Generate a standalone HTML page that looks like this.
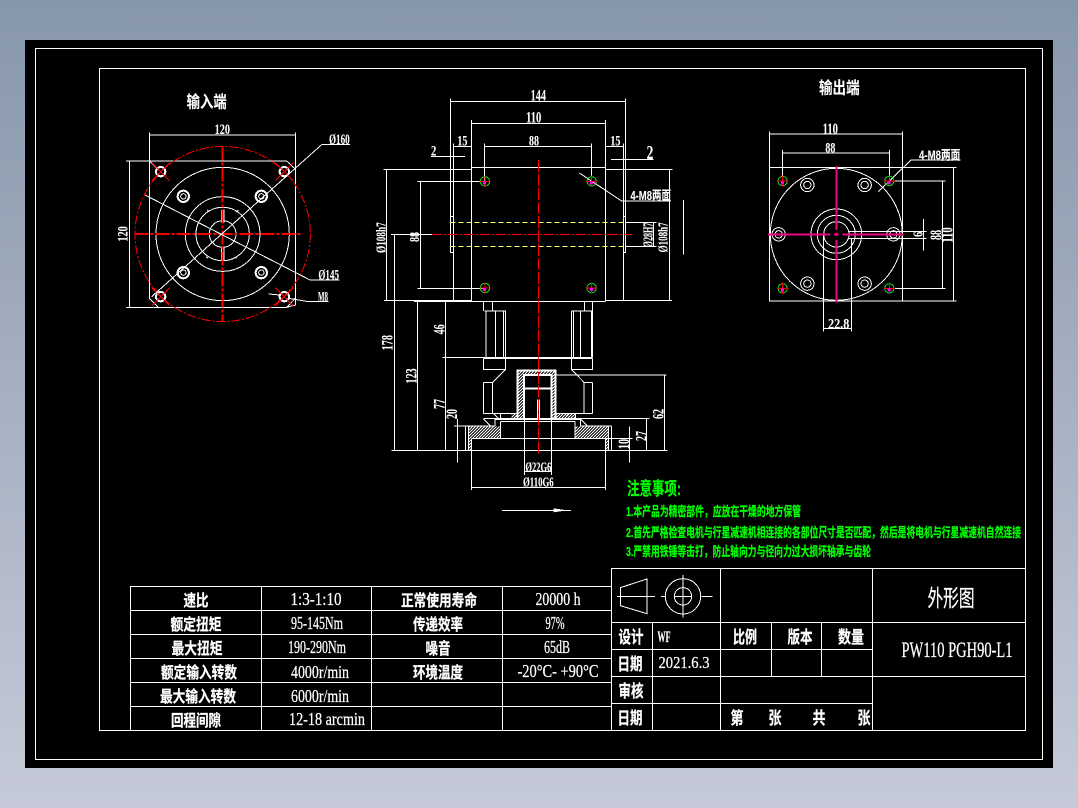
<!DOCTYPE html>
<html><head><meta charset="utf-8"><title>外形图</title>
<style>
html,body{margin:0;padding:0;width:1078px;height:808px;overflow:hidden;background:linear-gradient(#8797ab,#c6cad8)}
svg{position:absolute;left:0;top:0}
.z path,.z line,.z circle,.z rect{vector-effect:non-scaling-stroke}
.w{fill:none;stroke:#fff;stroke-width:1}
.b{fill:none;stroke:#fff;stroke-width:2}
.r{fill:none;stroke:#f00;stroke-width:1}
.rd{fill:none;stroke:#f00;stroke-width:1;stroke-dasharray:9 2 2 2}
.rt{fill:none;stroke:#f00;stroke-width:1;stroke-dasharray:10 2 2 2}
.rt2{fill:none;stroke:#f00;stroke-width:2;stroke-dasharray:14 2 3 2}
.m{fill:none;stroke:#f0047f;stroke-width:2}
.y{fill:none;stroke:#ffff70;stroke-width:1;stroke-dasharray:5 3}
.g{fill:none;stroke:#1ddc1d;stroke-width:1}
text{fill:#fff;stroke:#fff;stroke-width:.25px;font-family:"Liberation Serif","Noto Sans CJK SC",serif;text-anchor:middle}
.c{font-family:"Liberation Sans","Noto Sans CJK SC",sans-serif;font-weight:700}
.gr{fill:#0f0;stroke:#0f0;text-anchor:start;font-family:"Liberation Sans","Noto Sans CJK SC",sans-serif;font-weight:700}
</style></head><body>
<svg width="1078" height="808" viewBox="0 0 1078 808" xmlns="http://www.w3.org/2000/svg" shape-rendering="crispEdges">
<defs>
<pattern id="h" patternUnits="userSpaceOnUse" width="9" height="9"><path d="M-2 2L2 -2M0 9L9 0M7 11L11 7" stroke="#fff" stroke-width="2.6" fill="none"/></pattern>
</defs>
<rect x="25" y="40" width="1028" height="728" fill="#000"/>
<rect x="35.5" y="48.5" width="1007" height="711" fill="none" stroke="#fff"/>
<rect x="99.5" y="68.5" width="926" height="662" fill="none" stroke="#fff"/>

<!-- input view -->
<g class="z" transform="translate(100 70) scale(.33333)">
<path class="w" d="M78 273H560L586 297V705L560 712H78M148 187V685L175 712M148 273L175 300M88 273V712M148 195H586M586 187V297M560 712L586 685"/>
<circle class="rd" cx="368" cy="492" r="263"/>
<circle class="w" cx="368" cy="492" r="200"/>
<circle class="w" cx="368" cy="492" r="112"/>
<circle class="w" cx="368" cy="492" r="80"/>
<circle class="w" cx="368" cy="492" r="40"/>
<path class="w" d="M364 420H372V458M364 420V458M364 530V572H372V530M322 420l6 6M415 420l-6 6M318 560l6 4M410 565l-6-4"/>
<circle class="b" cx="182" cy="305" r="14"/><circle class="b" cx="553" cy="305" r="14"/><circle class="b" cx="182" cy="680" r="14"/><circle class="b" cx="553" cy="680" r="14"/>
<g><circle class="b" cx="250" cy="379" r="17"/><circle class="w" cx="250" cy="379" r="8"/><circle class="b" cx="484" cy="379" r="17"/><circle class="w" cx="484" cy="379" r="8"/><circle class="b" cx="250" cy="608" r="17"/><circle class="w" cx="250" cy="608" r="8"/><circle class="b" cx="484" cy="608" r="17"/><circle class="w" cx="484" cy="608" r="8"/></g>
<path class="r" d="M155 278L209 332M209 278L155 332M526 278L580 332M580 278L526 332M155 653L209 707M209 653L155 707M526 653L580 707M580 653L526 707"/>
<path class="rt2" d="M103 492H606M368 230V755"/>
<path class="w" d="M155 680L665 224H750M135 375L630 630H718M505 672L540 675M565 685L625 695H685"/>
<text x="320" y="112" font-size="50" class="c" textLength="120" lengthAdjust="spacingAndGlyphs">输入端</text>
<text x="367" y="192" font-size="44" textLength="46" lengthAdjust="spacingAndGlyphs" font-weight="700">120</text>
<text transform="translate(83 492) rotate(-90)" font-size="44" textLength="46" lengthAdjust="spacingAndGlyphs" font-weight="700">120</text>
<text x="718" y="222" font-size="44" textLength="62" lengthAdjust="spacingAndGlyphs" font-weight="700">Ø160</text>
<text x="686" y="629" font-size="44" textLength="62" lengthAdjust="spacingAndGlyphs" font-weight="700">Ø145</text>
<text x="669" y="694" font-size="44" textLength="30" lengthAdjust="spacingAndGlyphs" font-weight="700">M8</text>
</g>

<!-- main view -->
<g class="z" transform="translate(370 80) scale(.33333)">
<path class="w" d="M241 55V518H250M766 55V518H760M241 409H250M766 409H760M241 64H766M304 120V664M706 120V664M304 130H706M343 190V304M664 190V304M343 199H664M250 190V661M760 190V661M250 199H304M706 199H760M183 229H285M723 238H850M304 262H706M40 268H304M706 268H908M304 664H706M132 664H304M42 661H304M706 661H906M49 268V661M898 268V661M151 304V625M142 304H343M142 625H343M63 463H186M73 463V690M142 664V690M226 664V690M340 664V690M367 664V690M643 664V690M667 664V690M766 427H860M766 499H860M850 427V499M940 360V524"/>
<path class="y" d="M241 427H766M241 499H766"/>
<path class="rt" d="M186 463H786"/>
<path class="rt" stroke-dasharray="12 1" style="stroke-dasharray:12 2" d="M505 240V690"/>
<path class="w" d="M628 279L755 363H903"/>
<g id="hh">
<circle class="g" cx="345" cy="304" r="14"/><circle class="g" cx="665" cy="304" r="14"/><circle class="g" cx="345" cy="624" r="14"/><circle class="g" cx="665" cy="624" r="14"/>
<path class="r" d="M328 304H362M345 287V321M648 304H682M665 287V321M328 624H362M345 607V641M648 624H682M665 607V641"/>
<rect x="339" y="304" width="9" height="9" fill="#f0f"/><rect x="660" y="304" width="9" height="9" fill="#f0f"/><rect x="339" y="624" width="9" height="9" fill="#f0f"/><rect x="660" y="624" width="9" height="9" fill="#f0f"/>
</g>
<g font-weight="700">
<text x="505" y="62" font-size="46" textLength="46" lengthAdjust="spacingAndGlyphs">144</text>
<text x="491" y="128" font-size="46" textLength="46" lengthAdjust="spacingAndGlyphs">110</text>
<text x="492" y="197" font-size="44" textLength="30" lengthAdjust="spacingAndGlyphs">88</text>
<text x="277" y="197" font-size="44" textLength="30" lengthAdjust="spacingAndGlyphs">15</text>
<text x="736" y="197" font-size="44" textLength="30" lengthAdjust="spacingAndGlyphs">15</text>
<text x="191" y="227" font-size="44" textLength="16" lengthAdjust="spacingAndGlyphs">2</text>
<text x="840" y="237" font-size="60" textLength="20" lengthAdjust="spacingAndGlyphs">2</text>
<text x="842" y="360" font-size="40" class="c" textLength="122" lengthAdjust="spacingAndGlyphs">4-M8两面</text>
<text transform="translate(46 473) rotate(-90)" font-size="42" textLength="92" lengthAdjust="spacingAndGlyphs">Ø108h7</text>
<text transform="translate(892 472) rotate(-90)" font-size="42" textLength="90" lengthAdjust="spacingAndGlyphs">Ø108h7</text>
<text transform="translate(848 465) rotate(-90)" font-size="42" textLength="74" lengthAdjust="spacingAndGlyphs">Ø28H7</text>
<text transform="translate(147 471) rotate(-90)" font-size="42" textLength="30" lengthAdjust="spacingAndGlyphs">88</text>
</g>
</g>

<!-- lower section -->
<g class="z" transform="translate(370 295) scale(.33333)">
<rect x="442" y="226" width="115" height="14" fill="url(#h)"/>
<rect x="442" y="240" width="20" height="130" fill="url(#h)"/>
<rect x="545" y="240" width="12" height="130" fill="url(#h)"/>
<rect x="425" y="355" width="20" height="15" fill="url(#h)"/>
<rect x="557" y="355" width="33" height="15" fill="url(#h)"/>
<rect x="590" y="355" width="26" height="15" fill="url(#h)"/>
<rect x="296" y="394" width="94" height="36" fill="url(#h)"/>
<rect x="617" y="394" width="99" height="36" fill="url(#h)"/>
<rect x="296" y="430" width="8" height="36" fill="url(#h)"/>
<rect x="706" y="430" width="10" height="36" fill="url(#h)"/>
<path class="w" d="M340 20V48M368 20V48M343 48H407V187M348 48V187M377 48V187M400 48V187M604 48H666V187M604 48V187M632 48V187M610 48V187M643 20V48M667 20V48M217 187H668"/>
<path class="b" d="M340 189H668M666 48V187"/>
<path class="w" d="M340 190V223H407V190M604 190V223H668V190M340 262V355M368 262V355M405 225L368 262H340M606 225L642 262H668M642 262V355M668 262V355"/>
<path class="b" d="M442 370V226H557V370M462 370V240H545V370M462 280H545"/>
<path class="w" d="M463 370V535M545 370V535M340 355H445M557 355H668M340 370H838M370 355L388 372M392 355V372M616 355V372M596 355L586 368"/>
<path class="w" d="M375 393V373H632V393M392 380H615M392 380V430M615 380V430M252 393H375M632 393H725M286 393V466M296 393V466M716 393V466M725 393V466M304 430H788M304 430V585M706 430V585M64 466H893M340 372L362 393M632 373L652 393M557 240H890"/>
<path class="w" d="M883 240V466M830 370V466M778 395V503M262 372V503M226 20V466M142 20V466M73 0V466M463 530H545M304 577H706M463 530V540M545 530V540M396 646H603"/>
<path fill="#fff" d="M550 640L592 646L550 652Z"/>
<rect x="502" y="315" width="6" height="57" fill="#000" stroke="#fff"/>
<path class="rt" style="stroke-dasharray:12 2" d="M505 20V482"/>
<g font-weight="700">
<text transform="translate(68 143) rotate(-90)" font-size="46" textLength="46" lengthAdjust="spacingAndGlyphs">178</text>
<text transform="translate(139 243) rotate(-90)" font-size="46" textLength="46" lengthAdjust="spacingAndGlyphs">123</text>
<text transform="translate(223 103) rotate(-90)" font-size="46" textLength="30" lengthAdjust="spacingAndGlyphs">46</text>
<text transform="translate(223 327) rotate(-90)" font-size="46" textLength="30" lengthAdjust="spacingAndGlyphs">77</text>
<text transform="translate(261 357) rotate(-90)" font-size="46" textLength="30" lengthAdjust="spacingAndGlyphs">20</text>
<text transform="translate(881 357) rotate(-90)" font-size="46" textLength="30" lengthAdjust="spacingAndGlyphs">62</text>
<text transform="translate(829 423) rotate(-90)" font-size="46" textLength="30" lengthAdjust="spacingAndGlyphs">27</text>
<text transform="translate(777 447) rotate(-90)" font-size="46" textLength="30" lengthAdjust="spacingAndGlyphs">10</text>
<text x="505" y="529" font-size="42" textLength="78" lengthAdjust="spacingAndGlyphs">Ø22G6</text>
<text x="505" y="575" font-size="42" textLength="92" lengthAdjust="spacingAndGlyphs">Ø110G6</text>
</g>
</g>

<!-- output view -->
<g class="z" transform="translate(750 70) scale(.33333)">
<path class="w" d="M58 185V693H457V185M58 292H620M457 693H620M58 192H457M97 240V333M418 240V333M97 249H418M610 292V693M577 333V655M430 333H587M430 655H587M520 447V542M295 484H530M295 505H530M220 493V785M304 505V785M220 776H304M483 270H632M483 270L385 365"/>
<circle class="w" cx="259" cy="493" r="198"/>
<circle class="w" cx="259" cy="493" r="76"/><circle class="w" cx="259" cy="493" r="57"/><circle class="w" cx="259" cy="493" r="38"/>
<g>
<circle class="w" cx="172" cy="345" r="20"/><circle class="w" cx="172" cy="345" r="11"/>
<circle class="w" cx="344" cy="345" r="20"/><circle class="w" cx="344" cy="345" r="11"/>
<circle class="w" cx="86" cy="493" r="20"/><circle class="w" cx="86" cy="493" r="11"/>
<circle class="w" cx="430" cy="493" r="20"/><circle class="w" cx="430" cy="493" r="11"/>
<circle class="w" cx="172" cy="641" r="20"/><circle class="w" cx="172" cy="641" r="11"/>
<circle class="w" cx="344" cy="641" r="20"/><circle class="w" cx="344" cy="641" r="11"/>
</g>
<circle class="g" cx="98" cy="333" r="14"/><circle class="g" cx="418" cy="333" r="14"/><circle class="g" cx="98" cy="655" r="14"/><circle class="g" cx="418" cy="655" r="14"/>
<path class="r" d="M81 333H115M98 316V350M401 333H435M418 316V350M81 655H115M98 638V672M401 655H435M418 638V672"/>
<rect x="93" y="334" width="9" height="9" fill="#f0f"/><rect x="413" y="334" width="9" height="9" fill="#f0f"/><rect x="93" y="655" width="9" height="9" fill="#f0f"/><rect x="413" y="655" width="9" height="9" fill="#f0f"/>
<path class="m" d="M54 493H240M252 493H266M278 493H460M259 288V480M259 488V498M259 510V698"/>
<text x="268" y="70" font-size="50" class="c" textLength="122" lengthAdjust="spacingAndGlyphs">输出端</text>
<g font-weight="700">
<text x="241" y="192" font-size="48" textLength="46" lengthAdjust="spacingAndGlyphs">110</text>
<text x="241" y="248" font-size="44" textLength="30" lengthAdjust="spacingAndGlyphs">88</text>
<text x="569" y="268" font-size="40" class="c" textLength="124" lengthAdjust="spacingAndGlyphs">4-M8两面</text>
<text x="266" y="776" font-size="44" textLength="64" lengthAdjust="spacingAndGlyphs">22.8</text>
<text transform="translate(607 495) rotate(-90)" font-size="50" textLength="46" lengthAdjust="spacingAndGlyphs">110</text>
<text transform="translate(574 495) rotate(-90)" font-size="50" textLength="30" lengthAdjust="spacingAndGlyphs">88</text>
<text transform="translate(518 493) rotate(-90)" font-size="42" textLength="16" lengthAdjust="spacingAndGlyphs">6</text>
</g>
</g>

<!-- green notes -->
<text class="gr" x="627" y="495" font-size="18" textLength="54" lengthAdjust="spacingAndGlyphs">注意事项:</text>
<text class="gr" x="626" y="516" font-size="13" textLength="175" lengthAdjust="spacingAndGlyphs">1.本产品为精密部件，应放在干燥的地方保管</text>
<text class="gr" x="626" y="537" font-size="13" textLength="395" lengthAdjust="spacingAndGlyphs">2.首先严格检查电机与行星减速机相连接的各部位尺寸是否匹配，然后是将电机与行星减速机自然连接</text>
<text class="gr" x="626" y="556" font-size="13" textLength="245" lengthAdjust="spacingAndGlyphs">3.严禁用铁锤等击打，防止轴向力与径向力过大损坏轴承与齿轮</text>

<!-- spec table -->
<path stroke="#fff" fill="none" d="M130.5 586.5H611.5M130.5 610.5H611.5M130.5 634.5H611.5M130.5 658.5H611.5M130.5 682.5H611.5M130.5 706.5H611.5M130.5 730.5H611.5M130.5 586V731M261.5 586V731M371.5 586V731M502.5 586V731"/>
<g font-size="18">
<g class="c" font-size="16">
<text x="196" y="606" textLength="25" lengthAdjust="spacingAndGlyphs">速比</text>
<text x="196" y="630" textLength="51" lengthAdjust="spacingAndGlyphs">额定扭矩</text>
<text x="197" y="654" textLength="51" lengthAdjust="spacingAndGlyphs">最大扭矩</text>
<text x="199" y="678" textLength="76" lengthAdjust="spacingAndGlyphs">额定输入转数</text>
<text x="198" y="702" textLength="76" lengthAdjust="spacingAndGlyphs">最大输入转数</text>
<text x="196" y="726" textLength="50" lengthAdjust="spacingAndGlyphs">回程间隙</text>
<text x="439" y="606" textLength="76" lengthAdjust="spacingAndGlyphs">正常使用寿命</text>
<text x="438" y="630" textLength="50" lengthAdjust="spacingAndGlyphs">传递效率</text>
<text x="438" y="654" textLength="25" lengthAdjust="spacingAndGlyphs">噪音</text>
<text x="438" y="678" textLength="50" lengthAdjust="spacingAndGlyphs">环境温度</text>
</g>
<text x="316" y="605" textLength="51" lengthAdjust="spacingAndGlyphs">1:3-1:10</text>
<text x="317" y="629" textLength="52" lengthAdjust="spacingAndGlyphs">95-145Nm</text>
<text x="317" y="653" textLength="58" lengthAdjust="spacingAndGlyphs">190-290Nm</text>
<text x="320" y="678" textLength="58" lengthAdjust="spacingAndGlyphs">4000r/min</text>
<text x="320" y="702" textLength="58" lengthAdjust="spacingAndGlyphs">6000r/min</text>
<text x="327" y="725" textLength="76" lengthAdjust="spacingAndGlyphs">12-18 arcmin</text>
<text x="558" y="605" textLength="45" lengthAdjust="spacingAndGlyphs">20000 h</text>
<text x="555" y="629" textLength="19" lengthAdjust="spacingAndGlyphs">97%</text>
<text x="557" y="653" textLength="26" lengthAdjust="spacingAndGlyphs">65dB</text>
<text x="558" y="677" textLength="81" lengthAdjust="spacingAndGlyphs">-20°C- +90°C</text>
</g>

<!-- title block -->
<path stroke="#fff" fill="none" d="M611.5 568.5H1025.5V730.5H611.5ZM611.5 622.5H1025.5M611.5 649.5H872.5M611.5 676.5H1025.5M611.5 703.5H872.5M652.5 622V731M720.5 568V731M872.5 568V731M771.5 622V676M821.5 622V676"/>
<g class="z" transform="translate(605 565) scale(.33333)">
<path class="w" d="M126 42V146L46 122V68ZM36 94H150M168 94H180M290 94H322"/>
<circle class="w" cx="234" cy="94" r="53"/><circle class="w" cx="234" cy="94" r="26"/>
<path class="w" d="M234 30V158M210 94H258"/>
</g>
<g class="c">
<text x="631" y="643" font-size="17" textLength="25" lengthAdjust="spacingAndGlyphs">设计</text>
<text x="630" y="670" font-size="17" textLength="25" lengthAdjust="spacingAndGlyphs">日期</text>
<text x="631" y="697" font-size="17" textLength="25" lengthAdjust="spacingAndGlyphs">审核</text>
<text x="630" y="724" font-size="17" textLength="25" lengthAdjust="spacingAndGlyphs">日期</text>
<text x="745" y="643" font-size="17" textLength="24" lengthAdjust="spacingAndGlyphs">比例</text>
<text x="800" y="643" font-size="17" textLength="25" lengthAdjust="spacingAndGlyphs">版本</text>
<text x="851" y="643" font-size="17" textLength="26" lengthAdjust="spacingAndGlyphs">数量</text>
<text x="737" y="724" font-size="17" textLength="13" lengthAdjust="spacingAndGlyphs">第</text>
<text x="775" y="724" font-size="17" textLength="13" lengthAdjust="spacingAndGlyphs">张</text>
<text x="819" y="724" font-size="17" textLength="13" lengthAdjust="spacingAndGlyphs">共</text>
<text x="864" y="724" font-size="17" textLength="13" lengthAdjust="spacingAndGlyphs">张</text>
</g>
<text x="951" y="606" font-size="23" style="font-family:'Liberation Sans','Noto Sans CJK SC',sans-serif" textLength="47" lengthAdjust="spacingAndGlyphs">外形图</text>
<text x="957" y="657" font-size="22" textLength="111" lengthAdjust="spacingAndGlyphs">PW110 PGH90-L1</text>
<text x="664" y="642" font-size="16" font-weight="700" textLength="13" lengthAdjust="spacingAndGlyphs">WF</text>
<text x="684" y="668" font-size="17" textLength="51" lengthAdjust="spacingAndGlyphs">2021.6.3</text>
</svg>
</body></html>
